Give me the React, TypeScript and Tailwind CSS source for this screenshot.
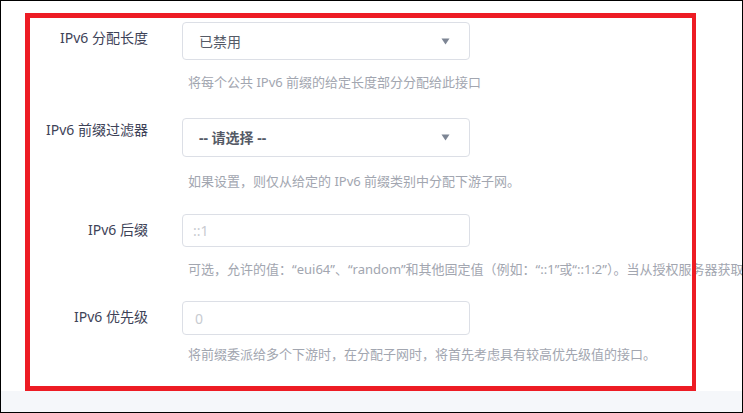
import React from "react";

const font = "font-['Noto_Sans','Noto_Sans_CJK_SC',sans-serif]";

function Caret() {
  return (
    <svg width="9" height="7" viewBox="0 0 9 7" className="shrink-0">
      <path d="M0.5 0.5h8L4.5 6.5z" fill="#7d8594" />
    </svg>
  );
}

interface RowProps {
  label: string;
  labelPad: string;
  box: React.ReactNode;
  desc: string;
  descGap: string;
  rowGap: string;
}

function Row({ label, labelPad, box, desc, descGap, rowGap }: RowProps) {
  return (
    <div className={`flex ${rowGap}`}>
      <div className={`w-[147px] shrink-0 text-right text-[14px] leading-[18px] text-[#3d4257] ${labelPad}`}>
        {label}
      </div>
      <div className="ml-[34px] flex flex-col">
        {box}
        <p className={`pl-[6px] whitespace-nowrap text-[13px] leading-[18px] text-[#a2a6b0] ${descGap}`}>
          {desc}
        </p>
      </div>
    </div>
  );
}

export default function App() {
  return (
    <div className={`relative w-[743px] h-[413px] overflow-hidden border border-black bg-white flex flex-col ${font}`}>
      <div className="h-[390px] shrink-0 pt-[21px]">
        <Row
          label="IPv6 分配长度"
          labelPad="pt-[7px]"
          rowGap=""
          descGap="mt-[13px]"
          desc="将每个公共 IPv6 前缀的给定长度部分分配给此接口"
          box={
            <div className="w-[288px] h-[38px] rounded border border-[#dcdfe6] flex items-center justify-between pl-[16px] pr-[19px] text-[14px] text-[#555a66]">
              <span>已禁用</span>
              <Caret />
            </div>
          }
        />
        <Row
          label="IPv6 前缀过滤器"
          labelPad="pt-[3px]"
          rowGap="mt-[27px]"
          descGap="mt-[15px]"
          desc="如果设置，则仅从给定的 IPv6 前缀类别中分配下游子网。"
          box={
            <div className="w-[288px] h-[39px] rounded border border-[#dcdfe6] flex items-center justify-between pl-[16px] pr-[19px] text-[14px] font-bold text-[#555a66]">
              <span>-- 请选择 --</span>
              <Caret />
            </div>
          }
        />
        <Row
          label="IPv6 后缀"
          labelPad="pt-[7px]"
          rowGap="mt-[24px]"
          descGap="mt-[13px]"
          desc="可选，允许的值：“eui64”、“random”和其他固定值（例如：“::1”或“::1:2”）。当从授权服务器获取到 IPv6 前缀时，将使用后缀来构造地址。"
          box={
            <div className="w-[288px] h-[33px] rounded border border-[#dcdfe6] flex items-center pl-[10px] text-[14px] text-[#c8cbd1]">
              ::1
            </div>
          }
        />
        <Row
          label="IPv6 优先级"
          labelPad="pt-[7px]"
          rowGap="mt-[23px]"
          descGap="mt-[10px]"
          desc="将前缀委派给多个下游时，在分配子网时，将首先考虑具有较高优先级值的接口。"
          box={
            <div className="w-[288px] h-[34px] rounded border border-[#dcdfe6] flex items-center pl-[12px] text-[14px] text-[#c8cbd1]">
              0
            </div>
          }
        />
      </div>
      <div className="flex-1 bg-[#f5f7fa]" />
      {/* annotation frame drawn over the form */}
      <div className="absolute left-[24px] top-[12px] w-[671px] h-[378px] border-[5px] border-r-4 border-[#ed1c24] pointer-events-none" />
    </div>
  );
}
